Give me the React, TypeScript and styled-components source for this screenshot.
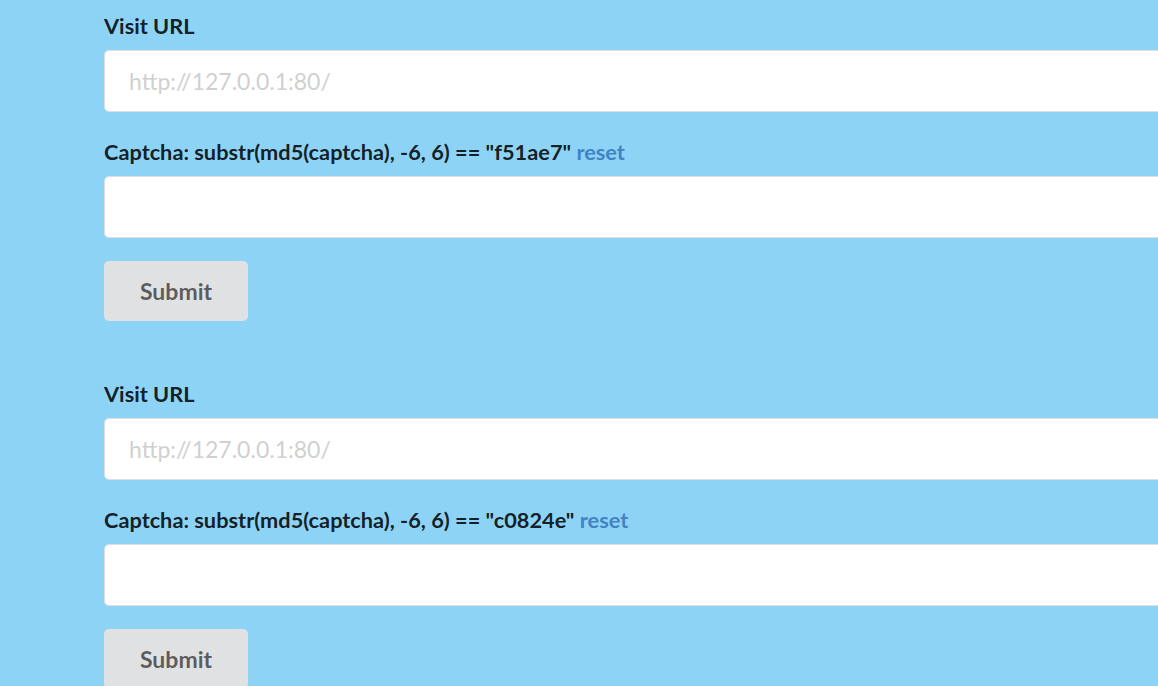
import React from "react";
import styled, { createGlobalStyle } from "styled-components";

const Global = createGlobalStyle`
  html, body { margin: 0; padding: 0; }
  body {
    background: #8dd3f6;
    font-family: Lato, "Open Sans", sans-serif;
    overflow: hidden;
  }
`;

const Page = styled.div`
  padding: 10px 0 0 104px;
  display: flex;
  flex-direction: column;
  gap: 57px;
`;

const Form = styled.form`
  display: flex;
  flex-direction: column;
  width: 1200px;
`;

const Field = styled.div`
  display: flex;
  flex-direction: column;
  margin-bottom: 23.5px;
`;

const Label = styled.label`
  font-size: 21.75px;
  font-weight: 700;
  line-height: 33px;
  color: rgba(0, 0, 0, 0.87);
  margin-bottom: 7px;
`;

const Link = styled.a`
  color: #4183c4;
  text-decoration: none;
  cursor: pointer;
`;

const Input = styled.input`
  box-sizing: border-box;
  height: 62px;
  width: 100%;
  padding: 0 24px;
  font-family: Lato, sans-serif;
  font-size: 23px;
  color: rgba(0, 0, 0, 0.87);
  background: #fff;
  border: 1px solid rgba(34, 36, 38, 0.15);
  border-radius: 5px;
  outline: none;
  &::placeholder {
    color: rgba(200, 200, 200, 0.87);
  }
`;

const Button = styled.button`
  align-self: flex-start;
  width: 144px;
  height: 60px;
  padding: 0;
  font-family: Lato, sans-serif;
  font-weight: 700;
  font-size: 23px;
  color: rgba(0, 0, 0, 0.6);
  background: #e0e1e2;
  border: none;
  border-radius: 5px;
  cursor: pointer;
`;

const forms = ["f51ae7", "c0824e"];

export default function App() {
  return (
    <>
      <Global />
      <Page>
        {forms.map((hash) => (
          <Form key={hash} onSubmit={(e) => e.preventDefault()}>
            <Field>
              <Label>Visit URL</Label>
              <Input placeholder="http://127.0.0.1:80/" />
            </Field>
            <Field>
              <Label>
                Captcha: substr(md5(captcha), -6, 6) == "{hash}" <Link>reset</Link>
              </Label>
              <Input />
            </Field>
            <Button type="submit">Submit</Button>
          </Form>
        ))}
      </Page>
    </>
  );
}
